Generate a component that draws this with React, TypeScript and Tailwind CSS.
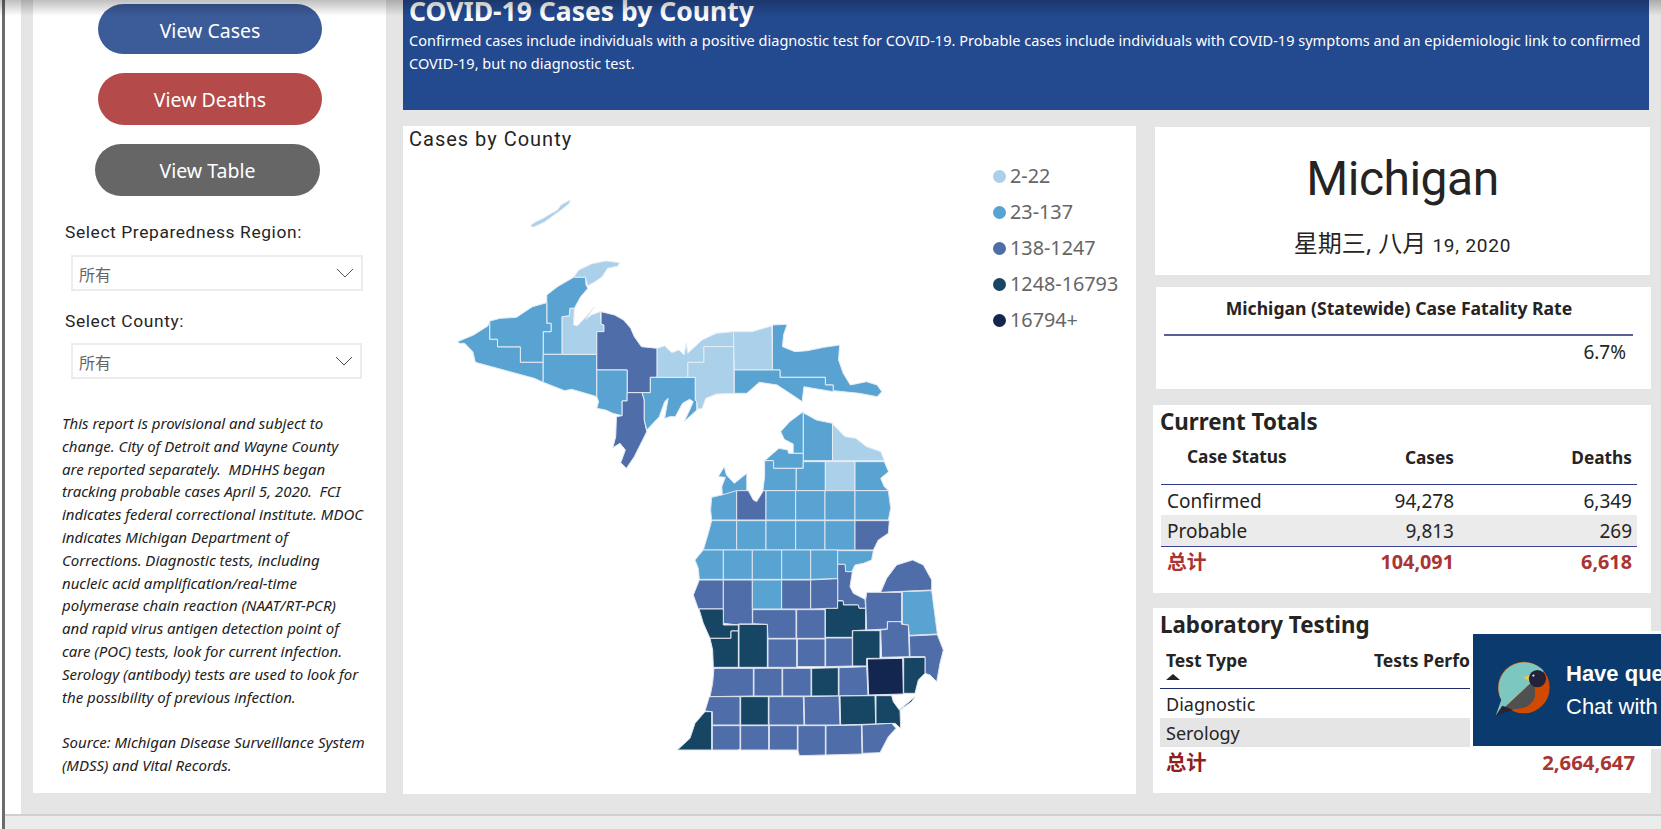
import React from 'react'

const L = '#abd0e9'
const M = '#59a3d2'
const D = '#4f6da8'
const T = '#174564'
const N = '#12264f'

// upper peninsula and northern tip, traced from a 2.8x / 3x crop
const northCounties: [string, string][] = [
  [L, '430,172 445,150 480,132 520,123 558,128 555,138 525,145 510,170 490,185 470,197 463,172'],
  [M, '355,225 385,200 430,172 463,172 465,195 470,205 450,230 432,265 420,265 418,288 398,290 398,403 345,403 345,335 367,335 367,310 355,310'],
  [M, '195,303 225,295 270,292 315,260 355,248 355,310 367,310 367,335 345,335 345,427 281,427 281,381 217,381 217,358 195,358'],
  [M, '105,365 150,345 190,318 195,303 195,358 217,358 217,381 281,381 281,427 345,427 345,487 320,475 155,427 148,395 125,370 110,370'],
  [M, '345,403 495,403 495,530 470,522 425,508 405,512 345,487'],
  [L, '398,290 418,288 420,265 432,265 430,315 440,318 465,290 487,262 465,298 480,285 505,275 507,312 515,315 515,335 495,335 495,403 398,403'],
  [D, '507,275 545,285 570,300 590,325 600,350 620,380 664,385 664,472 645,472 645,518 580,518 580,450 495,450 495,335 515,335 515,315 507,312'],
  [M, '495,450 580,450 580,543 566,543 566,587 540,580 520,570 495,565 500,545 495,530'],
  [D, '580,518 622,518 628,540 628,600 635,635 600,710 578,745 562,728 575,690 560,670 540,683 548,650 550,590 566,587 566,543 580,543'],
  [M, '645,472 771,472 771,540 775,545 775,570 750,595 740,605 755,570 765,545 755,538 735,550 715,590 700,590 685,595 695,535 685,545 670,590 635,630 628,600 628,540 622,518 645,518'],
  [L, '664,385 685,378 705,398 725,390 740,405 745,370 750,400 790,360 830,340 878,335 878,380 795,380 795,427 750,427 750,472 664,472'],
  [L, '795,380 878,380 880,520 830,522 800,535 790,565 778,568 775,545 771,540 771,472 750,472 750,427 795,427'],
  [L, '878,335 930,335 985,318 987,450 880,450'],
  [M, '987,315 1028,313 1018,345 1015,380 1050,395 1085,392 1130,382 1175,375 1172,420 1185,460 1205,495 1250,485 1280,495 1293,515 1280,530 1230,520 1157,512 1157,495 1135,495 1135,472 1008,472 1008,450 987,450'],
  [M, '880,450 1008,450 1008,472 1135,472 1135,495 1157,495 1157,515 1100,505 1075,500 1070,545 1050,530 1000,495 950,487 915,520 880,520'],
  [L, '310,15 325,5 345,-5 360,-15 385,-30 395,-45 420,-60 418,-50 395,-30 375,-15 350,5 325,18 315,22'],
  [M, '1073,578 1110,600 1155,610 1155,722 1073,722'],
  [M, '1073,575 1035,605 1010,635 1020,658 1045,672 1045,700 1073,700'],
  [M, '965,722 1005,685 1030,690 1032,700 1073,700 1073,745 990,745 988,722'],
  [L, '1155,612 1190,650 1220,655 1250,680 1290,695 1300,722 1155,722'],
  [M, '1053,745 1073,745 1073,725 1135,725 1135,812 1053,812'],
  [L, '1135,725 1218,725 1218,812 1135,812'],
  [M, '1218,725 1300,725 1312,755 1290,775 1300,800 1312,812 1218,812'],
  [M, '965,722 990,722 990,745 1053,745 1053,812 960,812 965,770'],
  [M, '845,800 855,772 835,770 852,740 858,765 880,790 915,760 915,833 847,833'],
]

// lower peninsula, traced from a 3x crop
const southCounties: [string, string][] = [
  [M, '215,-8 245,-15 290,-28 290,60 215,60 212,30'],
  [D, '290,-28 325,-28 340,0 350,5 370,-28 378,-28 378,60 290,60'],
  [M, '378,-28 467,-28 467,60 378,60'],
  [M, '467,-28 555,-28 555,60 467,60'],
  [M, '555,-28 645,-28 645,60 555,60'],
  [M, '645,-28 745,-28 752,25 745,60 645,60'],
  [M, '215,62 290,62 290,150 190,150 205,100'],
  [M, '290,62 378,62 378,150 290,150'],
  [M, '378,62 467,62 467,150 378,150'],
  [M, '467,62 555,62 555,150 467,150'],
  [M, '555,62 645,62 645,150 555,150'],
  [D, '645,62 748,62 745,100 715,120 705,140 700,150 645,150'],
  [M, '190,150 250,150 250,238 178,238 175,205 165,180'],
  [M, '250,150 337,150 337,238 250,238'],
  [M, '337,150 425,150 425,238 337,238'],
  [M, '425,150 512,150 512,238 425,238'],
  [M, '512,150 593,150 593,236 512,238'],
  [M, '593,152 700,152 695,180 670,190 645,195 635,215 617,215 615,193 593,193'],
  [D, '593,193 615,193 617,215 637,215 630,260 640,280 675,298 677,325 657,325 655,315 610,315 608,302 593,302'],
  [D, '178,240 250,240 250,327 175,327 160,285'],
  [D, '250,240 337,240 337,372 295,372 295,375 250,370'],
  [M, '337,240 425,240 425,327 337,327'],
  [D, '425,240 512,240 512,327 425,327'],
  [D, '512,240 593,236 593,325 512,327'],
  [T, '556,325 593,325 593,303 610,303 610,315 655,315 657,325 677,325 677,390 637,392 637,412 556,412'],
  [T, '177,327 250,327 250,375 295,375 295,393 273,393 273,415 210,415 190,370'],
  [T, '210,415 273,415 273,393 295,393 295,502 220,502 218,450'],
  [T, '297,373 382,373 382,502 297,502'],
  [D, '338,329 468,329 468,415 384,415 382,373 338,371'],
  [D, '470,329 555,329 555,415 470,415'],
  [D, '384,417 470,417 470,502 384,502'],
  [D, '472,417 555,417 555,500 472,500'],
  [D, '557,414 637,414 637,498 557,500'],
  [T, '638,392 720,392 720,475 680,475 680,498 638,498'],
  [D, '680,277 785,277 785,365 742,365 742,387 680,390 677,300'],
  [D, '722,277 740,235 770,195 818,180 850,195 875,240 875,270'],
  [M, '787,275 875,272 892,402 808,406 805,375 787,372'],
  [D, '722,390 742,388 743,365 783,365 785,373 805,375 808,470 725,472'],
  [D, '808,408 892,404 910,450 900,490 890,545 870,525 855,520 855,470 810,470'],
  [N, '682,477 788,475 790,582 686,585'],
  [T, '791,473 855,472 855,520 835,540 825,580 791,580'],
  [D, '222,505 340,505 340,588 210,590 218,550'],
  [D, '342,505 426,505 426,588 342,588'],
  [D, '428,505 513,505 513,588 428,588'],
  [T, '515,505 595,503 595,588 515,588'],
  [D, '597,503 680,500 684,586 597,588'],
  [D, '208,590 300,590 300,675 217,675 217,635 195,633'],
  [T, '195,635 215,635 215,750 112,750 150,715 165,670'],
  [T, '302,590 385,590 385,675 302,675'],
  [D, '387,590 490,590 492,675 387,675'],
  [D, '492,590 597,588 600,675 494,675'],
  [T, '600,588 705,587 707,672 602,675'],
  [T, '708,587 755,587 760,605 778,630 825,590 815,605 780,630 782,685 765,670 708,672'],
  [D, '217,677 300,677 300,745 295,750 217,750'],
  [D, '302,677 386,677 386,750 302,750'],
  [D, '388,677 472,677 472,750 388,750'],
  [D, '474,677 556,677 556,765 478,767 474,752'],
  [D, '558,677 664,675 666,762 558,765'],
  [D, '666,675 755,670 768,685 745,710 720,758 668,760'],
]

const legend: [string, string][] = [
  ['bg-[#abd0e9]', '2-22'],
  ['bg-[#59a3d2]', '23-137'],
  ['bg-[#4f6da8]', '138-1247'],
  ['bg-[#174564]', '1248-16793'],
  ['bg-[#12264f]', '16794+'],
]

const noteLines = [
  'This report is provisional and subject to',
  'change. City of Detroit and Wayne County',
  'are reported separately.  MDHHS began',
  'tracking probable cases April 5, 2020.  FCI',
  'indicates federal correctional institute. MDOC',
  'indicates Michigan Department of',
  'Corrections. Diagnostic tests, including',
  'nucleic acid amplification/real-time',
  'polymerase chain reaction (NAAT/RT-PCR)',
  'and rapid virus antigen detection point of',
  'care (POC) tests, look for current infection.',
  'Serology (antibody) tests are used to look for',
  'the possibility of previous infection.',
  ' ',
  'Source: Michigan Disease Surveillance System',
  '(MDSS) and Vital Records.',
]

const Chevron = () => (
  <svg width="18" height="10" viewBox="0 0 18 10" fill="none" stroke="#555" strokeWidth="1">
    <path d="M1 1l8 8 8-8" />
  </svg>
)

const Dropdown = ({ width }: { width: string }) => (
  <div className={`ml-[38px] flex h-[36px] items-center justify-between border-2 border-[#ececec] pl-[6px] pr-[7px] text-[16px] text-[#666] ${width}`}>
    <span className="pt-[4px]">所有</span>
    <Chevron />
  </div>
)

const MichiganMap = () => (
  <svg className="ml-[37px] block h-[624px] w-[520px] shrink-0" viewBox="440 156 520 624">
    <g transform="translate(420 220) scale(0.35714 0.33333)">
      {northCounties.map(([fill, points]) => (
        <polygon key={points} points={points} fill={fill} stroke="#e4ecf4" strokeWidth="1" vectorEffect="non-scaling-stroke" />
      ))}
    </g>
    <g transform="translate(640 500) scale(0.33333)">
      {southCounties.map(([fill, points]) => (
        <polygon key={points} points={points} fill={fill} stroke="#dfe5ef" strokeWidth="1" vectorEffect="non-scaling-stroke" />
      ))}
    </g>
  </svg>
)

const Bird = () => (
  <svg className="shrink-0" width="58" height="58" viewBox="100 115 175 175">
    <circle cx="190" cy="195" r="78" fill="#d04a02" />
    <path d="M105 280L122 232A78 78 0 0 1 250 145Z" fill="#7cc7bf" />
    <path d="M222 172L224 222C215 250 185 265 150 258L125 262Z" fill="#505050" />
    <path d="M105 280L125 250L158 262Z" fill="#26263a" />
    <path d="M187 165L208 157V176Z" fill="#f2c450" />
    <circle cx="231" cy="168" r="26" fill="#22223a" />
    <circle cx="219" cy="159" r="3.5" fill="#ddd" />
  </svg>
)

const TotalsRow = ({ a, b, c, className }: { a: string; b: string; c: string; className: string }) => (
  <div className={`grid grid-cols-[132px_167px_177px] items-center ${className}`}>
    <div className="pl-[6px]">{a}</div>
    <div className="pr-[6px] text-right">{b}</div>
    <div className="pr-[5px] text-right">{c}</div>
  </div>
)

export default function App() {
  return (
    <div className="relative flex h-[829px] w-[1661px] overflow-hidden bg-white font-['Noto_Sans','Noto_Sans_CJK_SC',sans-serif] text-[#252423]">
      <div className="ml-[2px] w-[3px] shrink-0 bg-[#6b6b6b]" />
      <div className="flex min-w-0 flex-1 flex-col">
        <div className="flex h-[814px] bg-white">
          <div className="w-[16px] shrink-0" />
          <div className="flex flex-1 bg-[#e5e5e5]">
            {/* filters column */}
            <div className="ml-[12px] flex h-[793px] w-[353px] shrink-0 flex-col bg-white pt-[4px]">
              <div className="ml-[65px] flex h-[50px] w-[224px] items-center justify-center rounded-[25px] bg-[#3b5b99] pt-[3px] text-[19.5px] text-white">View Cases</div>
              <div className="ml-[65px] mt-[19px] flex h-[52px] w-[224px] items-center justify-center rounded-[26px] bg-[#b44a4a] pt-[2px] text-[19.5px] text-white">View Deaths</div>
              <div className="ml-[62px] mt-[19px] flex h-[52px] w-[225px] items-center justify-center rounded-[26px] bg-[#666] pt-[2px] text-[19.5px] text-white">View Table</div>
              <div className="ml-[32px] mt-[24px] h-[24px] font-['Roboto',sans-serif] text-[17.4px] leading-[24px] tracking-[0.6px]">Select Preparedness Region:</div>
              <div className="mt-[11px]">
                <Dropdown width="w-[292px]" />
              </div>
              <div className="ml-[32px] mt-[18px] h-[24px] font-['Roboto',sans-serif] text-[17.4px] leading-[24px] tracking-[0.6px]">Select County:</div>
              <div className="mt-[10px]">
                <Dropdown width="w-[291px]" />
              </div>
              <div className="ml-[29px] mt-[33px] text-[15px] italic leading-[22.8px] text-[#222]">
                {noteLines.map((line, i) => (
                  <div key={i} className="h-[22.8px] whitespace-pre">{line}</div>
                ))}
              </div>
            </div>

            {/* main area */}
            <div className="ml-[17px] flex w-[1246px] shrink-0 flex-col">
              <div className="h-[110px] bg-[#23498f] pl-[6px] text-white">
                <div className="-mt-[4px] text-[26.5px] font-bold leading-[30px]">COVID-19 Cases by County</div>
                <div className="mt-[3px] whitespace-nowrap text-[14.54px] leading-[23px]">
                  Confirmed cases include individuals with a positive diagnostic test for COVID-19. Probable cases include individuals with COVID-19 symptoms and an epidemiologic link to confirmed
                </div>
                <div className="text-[14.54px] leading-[23px]">COVID-19, but no diagnostic test.</div>
              </div>

              <div className="mt-[16px] flex">
                <div className="h-[668px] w-[733px] shrink-0 bg-white">
                  <div className="h-[30px] pl-[6px] font-['Roboto',sans-serif] text-[20px] leading-[26px] tracking-[1px]">Cases by County</div>
                  <div className="flex">
                    <MichiganMap />
                    <div className="ml-[33px] mt-[2px] flex flex-col text-[19.8px] text-[#666]">
                      {legend.map(([dot, label]) => (
                        <div key={label} className="flex h-[36px] items-center gap-[4px] whitespace-nowrap">
                          <span className={`h-[13px] w-[13px] rounded-full ${dot}`} />
                          {label}
                        </div>
                      ))}
                    </div>
                  </div>
                </div>

                <div className="ml-[17px] flex w-[498px] shrink-0 flex-col">
                  <div className="ml-[2px] mt-[1px] flex h-[148px] w-[495px] flex-col items-center bg-white">
                    <div className="mt-[17px] font-['Roboto',sans-serif] text-[48px] leading-[70px] tracking-[-0.5px]">Michigan</div>
                    <div className="mt-[11px] flex items-baseline text-[24px] leading-[36px]">
                      星期三, 八月<span className="ml-[6px] font-['Roboto',sans-serif] text-[19px] tracking-[0.8px]">19, 2020</span>
                    </div>
                  </div>
                  <div className="ml-[3px] mt-[12px] flex h-[102px] w-[495px] flex-col bg-white">
                    <div className="ml-[8px] mt-[8px] w-[470px] text-center text-[17.6px] font-bold leading-[26px]">Michigan (Statewide) Case Fatality Rate</div>
                    <div className="ml-[8px] mt-[13px] w-[469px] border-t-2 border-[#5b5f97]" />
                    <div className="ml-[8px] w-[462px] text-right text-[19px] leading-[32px]">6.7%</div>
                  </div>
                  <div className="mt-[16px] h-[188px] w-[498px] bg-white pl-[8px]">
                    <div className="-ml-[1px] h-[34px] text-[22.3px] font-bold leading-[34px]">Current Totals</div>
                    <TotalsRow a="" b="Cases" c="Deaths" className="h-[45px] pb-[7px] text-[17.3px] font-bold" />
                    <div className="-mt-[45px] h-[45px] pl-[26px] pt-[5px] text-[17.3px] font-bold leading-[26px]">Case Status</div>
                    <div className="w-[476px] border-t border-[#2f3a8c]" />
                    <TotalsRow a="Confirmed" b="94,278" c="6,349" className="h-[30px] w-[476px] pt-[2px] text-[19px]" />
                    <TotalsRow a="Probable" b="9,813" c="269" className="h-[31px] w-[476px] bg-[#ebebeb] pt-[2px] text-[19px]" />
                    <div className="w-[476px] border-t border-[#3a4391]" />
                    <TotalsRow a="总计" b="104,091" c="6,618" className="h-[29px] w-[476px] text-[19.8px] font-bold text-[#a93434]" />
                  </div>
                  <div className="mt-[15px] h-[185px] w-[498px] bg-white pl-[7px]">
                    <div className="h-[34px] text-[22.3px] font-bold leading-[34px]">Laboratory Testing</div>
                    <div className="flex h-[47px] w-[310px] overflow-hidden border-b border-[#1f2a6b] text-[17.5px] font-bold">
                      <div className="w-[214px] shrink-0 pl-[6px] pt-[5px] leading-[26px]">
                        Test Type
                        <div className="mt-[1px] h-0 w-0 border-x-[7px] border-b-[6px] border-x-transparent border-b-[#252423]" />
                      </div>
                      <div className="whitespace-nowrap pt-[5px] leading-[26px]">Tests Performed</div>
                    </div>
                    <div className="flex h-[29px] w-[310px] items-center pl-[6px] pt-[1px] text-[18px]">Diagnostic</div>
                    <div className="flex h-[29px] w-[310px] items-center bg-[#e5e5e5] pl-[6px] pt-[1px] text-[18px]">Serology</div>
                    <div className="flex h-[31px] w-[475px] items-center justify-between pl-[6px] text-[20.3px] font-bold text-[#a93434]">
                      <span className="text-[#8f2020]">总计</span>
                      <span>2,664,647</span>
                    </div>
                  </div>
                </div>
              </div>
            </div>
          </div>
        </div>
        <div className="h-[15px] border-t-2 border-[#cfcfcf] bg-[#ececec]" />
      </div>

      {/* chat widget */}
      <div className="absolute left-[1470px] top-[631px] flex h-[118px] w-[191px] items-center overflow-hidden border-[3px] border-r-0 border-white bg-[#0a3a6e] pl-[21px] font-['Liberation_Sans',sans-serif] text-[22px] leading-[33px] text-white">
        <Bird />
        <div className="ml-[14px] whitespace-nowrap">
          <div className="font-bold">Have questions?</div>
          <div>Chat with us</div>
        </div>
      </div>

      {/* shadow under the browser toolbar */}
      <div className="pointer-events-none absolute inset-x-0 top-0 h-[16px] bg-gradient-to-b from-black/25 to-transparent" />
    </div>
  )
}
